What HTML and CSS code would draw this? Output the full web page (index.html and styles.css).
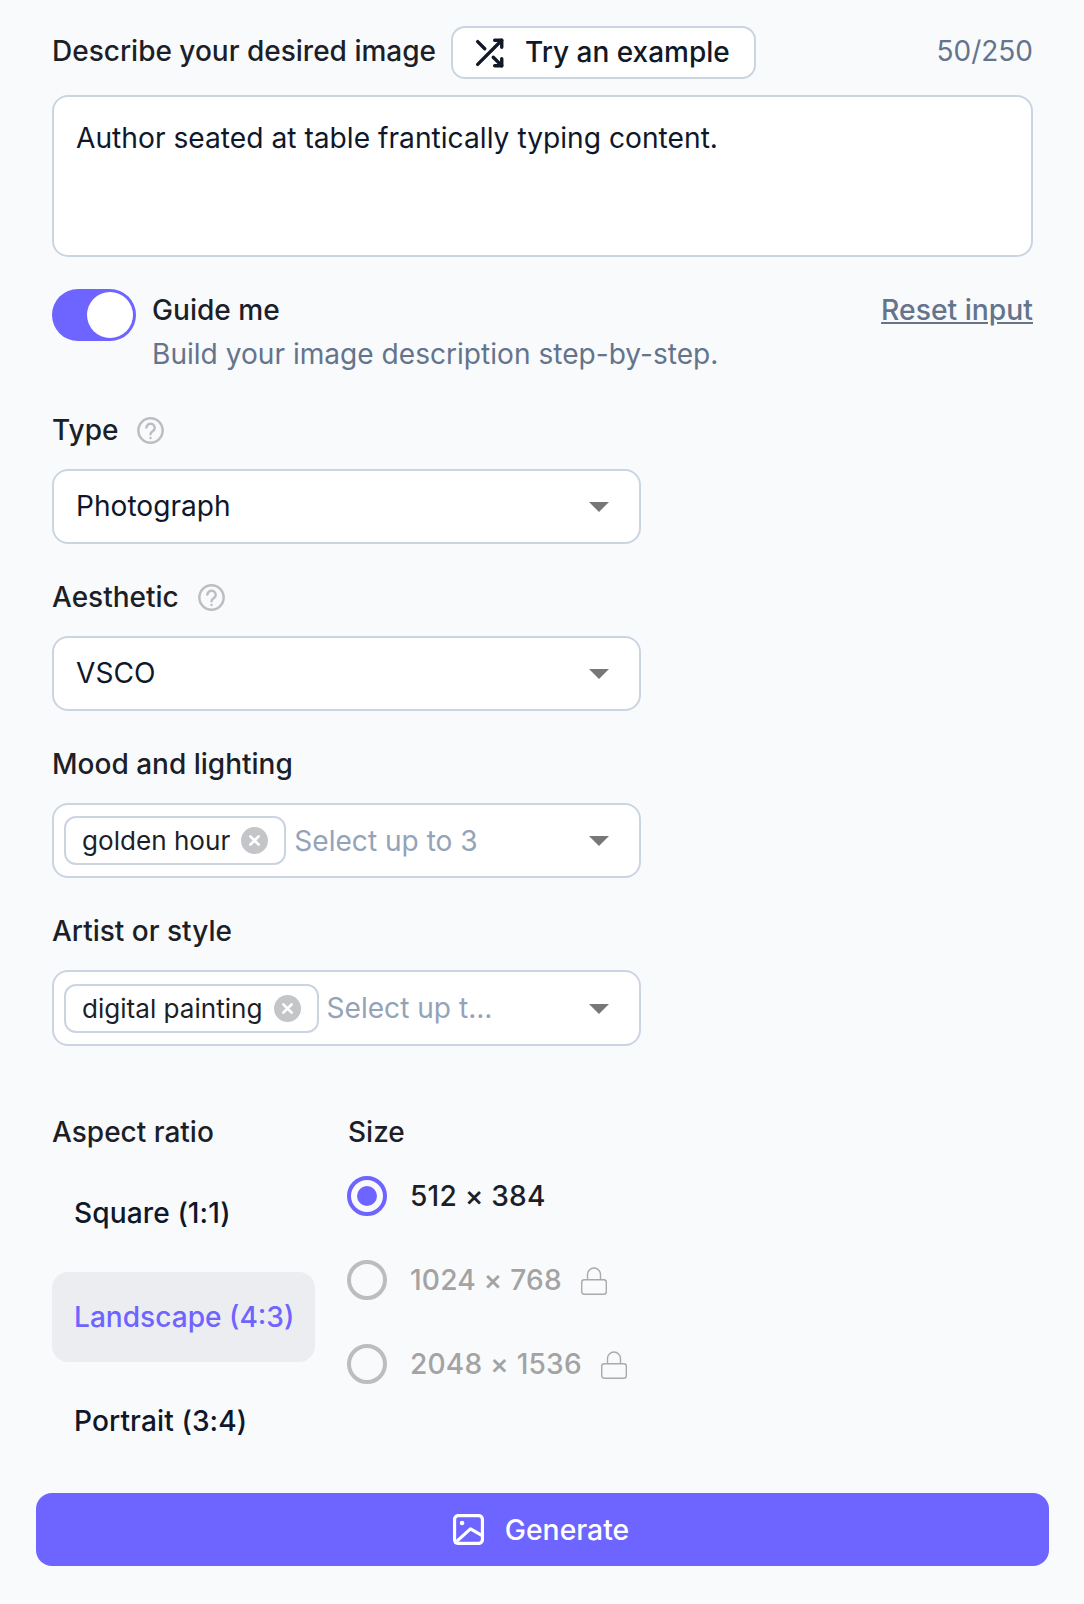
FILE: index.html
```html
<!DOCTYPE html>
<html lang="en">
<head>
<meta charset="utf-8">
<title>Generate image</title>
<link rel="stylesheet" href="styles.css">
</head>
<body>
<main class="page">
  <section class="form">
    <div class="prompt-head">
      <span class="label">Describe your desired image</span>
      <button class="try-btn" type="button">
        <svg class="shuffle" viewBox="0 0 24 24"><polyline points="16 3 21 3 21 8"/><line x1="4" y1="20" x2="21" y2="3"/><polyline points="21 16 21 21 16 21"/><line x1="15" y1="15" x2="21" y2="21"/><line x1="4" y1="4" x2="9" y2="9"/></svg>
        <span>Try an example</span>
      </button>
      <span class="count">50/250</span>
    </div>
    <div class="textarea">Author seated at table frantically typing content.</div>

    <div class="guide">
      <span class="toggle"><span class="knob"></span></span>
      <div class="guide-text">
        <div class="guide-title">Guide me</div>
        <div class="guide-sub">Build your image description step-by-step.</div>
      </div>
      <a class="reset" href="#">Reset input</a>
    </div>

    <div class="field">
      <div class="field-label"><span class="label">Type</span>
        <svg class="help" viewBox="0 0 26 26"><circle cx="13" cy="13" r="11.7"/><path d="M9 10.2a4 4 0 0 1 8 .8c0 2.6-4 3-4 5.6"/><line x1="13" y1="20.2" x2="13" y2="20.3"/></svg>
      </div>
      <div class="select"><span class="value">Photograph</span><span class="caret"></span></div>
    </div>
    <div class="field">
      <div class="field-label"><span class="label">Aesthetic</span>
        <svg class="help" viewBox="0 0 26 26"><circle cx="13" cy="13" r="11.7"/><path d="M9 10.2a4 4 0 0 1 8 .8c0 2.6-4 3-4 5.6"/><line x1="13" y1="20.2" x2="13" y2="20.3"/></svg>
      </div>
      <div class="select"><span class="value">VSCO</span><span class="caret"></span></div>
    </div>
    <div class="field">
      <div class="field-label"><span class="label">Mood and lighting</span></div>
      <div class="select multi">
        <span class="chip">golden hour
          <svg class="chip-x" viewBox="0 0 26 26"><circle cx="13" cy="13" r="13"/><path d="M9 9l8 8M17 9l-8 8"/></svg>
        </span>
        <span class="placeholder">Select up to 3</span><span class="caret"></span>
      </div>
    </div>
    <div class="field">
      <div class="field-label"><span class="label">Artist or style</span></div>
      <div class="select multi tall">
        <span class="chip">digital painting
          <svg class="chip-x" viewBox="0 0 26 26"><circle cx="13" cy="13" r="13"/><path d="M9 9l8 8M17 9l-8 8"/></svg>
        </span>
        <span class="placeholder">Select up t...</span><span class="caret"></span>
      </div>
    </div>

    <div class="options">
      <div class="aspect">
        <div class="label opt-title">Aspect ratio</div>
        <div class="aspect-list">
          <div class="aspect-item">Square (1:1)</div>
          <div class="aspect-item active">Landscape (4:3)</div>
          <div class="aspect-item">Portrait (3:4)</div>
        </div>
      </div>
      <div class="size">
        <div class="label opt-title">Size</div>
        <div class="size-list">
          <div class="size-item"><span class="radio checked"></span><span class="size-text">512 × 384</span></div>
          <div class="size-item off"><span class="radio"></span><span class="size-text">1024 × 768</span>
            <svg class="lock" viewBox="0 0 26 28"><rect x="0.7" y="12.7" width="24.6" height="14.6" rx="2.5"/><path d="M6.5 12.7V7.5a6.5 6.5 0 0 1 13 0v5.2"/></svg>
          </div>
          <div class="size-item off"><span class="radio"></span><span class="size-text">2048 × 1536</span>
            <svg class="lock" viewBox="0 0 26 28"><rect x="0.7" y="12.7" width="24.6" height="14.6" rx="2.5"/><path d="M6.5 12.7V7.5a6.5 6.5 0 0 1 13 0v5.2"/></svg>
          </div>
        </div>
      </div>
    </div>
  </section>
  <button class="generate" type="button">
    <svg class="image-icon" viewBox="0 0 24 24"><rect x="1.2" y="1.2" width="21.6" height="21.6" rx="3"/><circle cx="7" cy="7" r="1.8" class="dot"/><polyline points="2 22 13.5 11.5 23 17"/></svg>
    <span>Generate</span>
  </button>
</main>
</body>
</html>
```
FILE: styles.css
```css
* { box-sizing: border-box; }
html, body { margin: 0; padding: 0; }
body {
  background: #f9fafc;
  color: #0f172a;
  font-family: Inter, "Liberation Sans", sans-serif;
  font-size: 28.1px;
  height: 1604px;
  overflow: hidden;
}
.page { padding: 26px 35px 0 36px; }
.form { padding: 0 16px; }
.label { font-size: 28px; font-weight: 470; color: #1c1f28; }

.prompt-head { display: flex; align-items: center; height: 53px; }
.prompt-head .label { margin-right: 15px; margin-bottom: 3px; }
.try-btn {
  display: flex; align-items: center; gap: 19px;
  height: 53px; padding: 0 24px 2px 19px;
  background: #fff; border: 2px solid #cbd5e1; border-radius: 14px;
  font: 470 28px Inter, sans-serif; color: #111827;
}
.shuffle { width: 34px; height: 34px; margin-top: 2px; fill: none; stroke: #111827; stroke-width: 2.4; stroke-linecap: round; stroke-linejoin: round; }
.count { margin-left: auto; margin-bottom: 3px; color: #64748b; font-size: 28px; }

.textarea {
  margin-top: 16px; height: 162px; padding: 23px 22px;
  background: #fff; border: 2px solid #cbd5e1; border-radius: 16px;
  font-size: 28.2px; line-height: 36px;
}

.guide { display: flex; align-items: flex-start; margin-top: 32px; height: 88px; }
.toggle { width: 84px; height: 52px; border-radius: 26px; background: #6e64ff; padding: 3px; display: flex; justify-content: flex-end; flex: none; }
.knob { width: 46px; height: 46px; border-radius: 50%; background: #fff; }
.guide-text { margin-left: 16px; margin-top: -1px; }
.guide-title { font-weight: 470; line-height: 44px; color: #1c1f28; }
.guide-sub { color: #64748b; line-height: 44px; }
.reset { margin-left: auto; margin-top: -1px; font-size: 28.3px; font-weight: 470; color: #64748b; line-height: 44px; }

.field { margin-top: 14px; }
.field-label { display: flex; align-items: center; gap: 19px; height: 78px; }
.help { width: 27px; height: 27px; fill: none; stroke: #bcbec2; stroke-width: 2.4; stroke-linecap: round; }
.select {
  display: flex; align-items: center; width: 589px; height: 75px; padding: 0 22px;
  background: #fff; border: 2px solid #cbd5e1; border-radius: 16px;
}
.select.multi { padding-left: 10px; }
.select.tall { height: 76px; }
.value { color: #0f172a; margin-bottom: 1px; }
.caret { margin-left: auto; width: 0; height: 0; border-left: 10px solid transparent; border-right: 10px solid transparent; border-top: 10px solid #777; margin-right: 8px; margin-top: 1px; flex: none; }
.chip {
  display: flex; align-items: center; gap: 11px; height: 49px; padding: 0 16px;
  border: 2px solid #cbd5e1; border-radius: 12px; color: #1c1f28; flex: none;
  font-size: 26.1px;
}
.chip-x { width: 27px; height: 27px; fill: #c3c5c9; stroke: none; flex: none; }
.chip-x path { fill: none; stroke: #fff; stroke-width: 2.6; stroke-linecap: round; }
.placeholder { margin-left: 8px; color: #94a3b8; }

.options { display: flex; margin-top: 64px; }
.aspect { width: 296px; }
.opt-title { line-height: 44px; }
.aspect-list { display: flex; flex-direction: column; gap: 14px; width: 263px; margin-top: 14px; }
.aspect-item { height: 90px; padding: 0 22px; display: flex; align-items: center; border-radius: 16px; color: #0f172a; font-weight: 470; letter-spacing: 0.1px; white-space: nowrap; }
.aspect-item.active { background: #ecedf0; color: #6e64ff; letter-spacing: 0; }
.size-list { display: flex; flex-direction: column; gap: 44px; margin-top: 22px; }
.size-item { display: flex; align-items: center; height: 40px; color: #1c1f28; font-weight: 470; letter-spacing: 0.2px; }
.size-item.off { color: #a3a3a3; }
.radio { width: 40px; height: 40px; border-radius: 50%; border: 4px solid #bdbdbd; flex: none; margin-right: 23px; margin-left: -1px; }
.radio.checked { border-color: #6e64ff; padding: 6px; background: #6e64ff content-box; }
.lock { width: 26px; height: 28px; margin-left: 19px; margin-top: 2px; fill: none; stroke: #aaa; stroke-width: 1.4; }

.generate {
  display: flex; align-items: center; justify-content: center; gap: 21px;
  width: 1013px; height: 73px; margin-top: 27px; padding: 0 3px 0 0;
  background: #6e64ff; border: 0; border-radius: 16px; color: #fff;
  font: 470 28.3px Inter, sans-serif;
}
.image-icon { width: 31px; height: 31px; fill: none; stroke: #fff; stroke-width: 2.5; stroke-linejoin: round; stroke-linecap: round; }
.image-icon .dot { fill: #fff; stroke: none; }
```
